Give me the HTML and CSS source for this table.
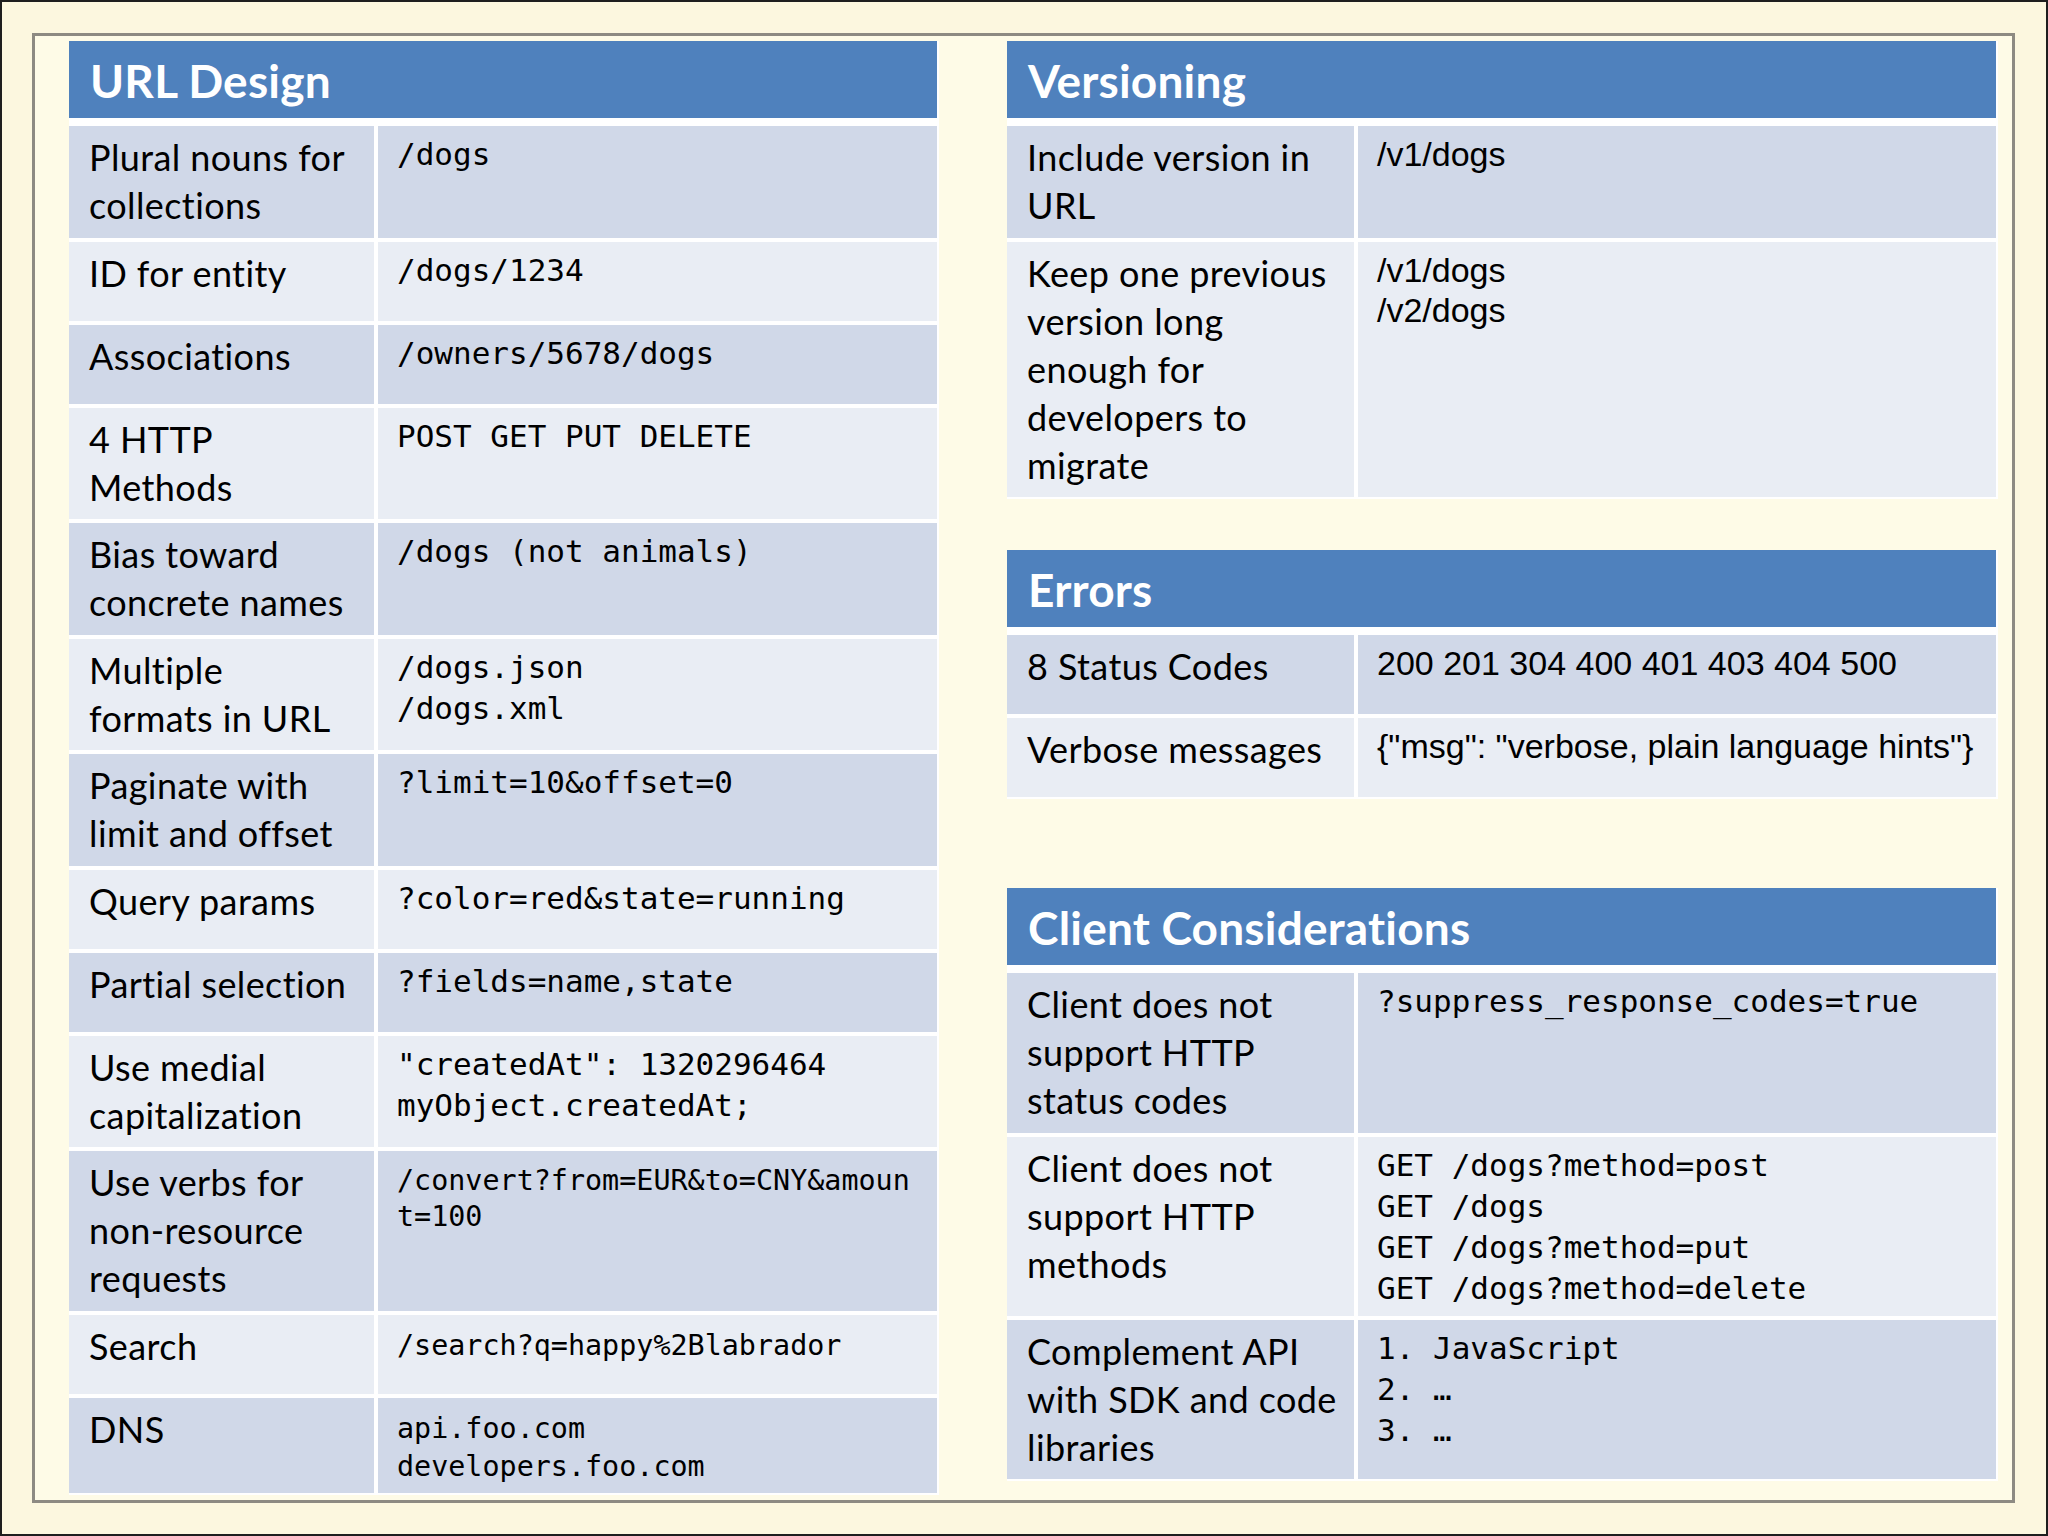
FILE: index.html
```html
<!DOCTYPE html>
<html lang="en">
<head>
<meta charset="utf-8">
<title>API Design Cheat Sheet</title>
<link rel="stylesheet" href="styles.css">
</head>
<body>
<div class="screen">
  <div class="frame">
    <div class="col">
      <section class="tbl tbl-left">
        <div class="hdr">URL Design</div>
        <div class="row odd"><div class="lbl">Plural nouns for<br>collections</div><div class="mono">/dogs</div></div>
        <div class="row even"><div class="lbl">ID for entity</div><div class="mono">/dogs/1234</div></div>
        <div class="row odd"><div class="lbl">Associations</div><div class="mono">/owners/5678/dogs</div></div>
        <div class="row even"><div class="lbl">4 HTTP<br>Methods</div><div class="mono">POST GET PUT DELETE</div></div>
        <div class="row odd"><div class="lbl">Bias toward<br>concrete names</div><div class="mono">/dogs (not animals)</div></div>
        <div class="row even"><div class="lbl">Multiple<br>formats in URL</div><div class="mono">/dogs.json<br>/dogs.xml</div></div>
        <div class="row odd"><div class="lbl">Paginate with<br>limit and offset</div><div class="mono">?limit=10&amp;offset=0</div></div>
        <div class="row even"><div class="lbl">Query params</div><div class="mono">?color=red&amp;state=running</div></div>
        <div class="row odd"><div class="lbl">Partial selection</div><div class="mono">?fields=name,state</div></div>
        <div class="row even"><div class="lbl">Use medial<br>capitalization</div><div class="mono">"createdAt": 1320296464<br>myObject.createdAt;</div></div>
        <div class="row odd"><div class="lbl">Use verbs for<br>non-resource<br>requests</div><div class="mono sm sm-tight">/convert?from=EUR&amp;to=CNY&amp;amoun<br>t=100</div></div>
        <div class="row even"><div class="lbl">Search</div><div class="mono sm">/search?q=happy%2Blabrador</div></div>
        <div class="row odd"><div class="lbl">DNS</div><div class="mono sm">api.foo.com<br>developers.foo.com</div></div>
      </section>
    </div>
    <div class="col col-right">
      <section class="tbl tbl-right">
        <div class="hdr">Versioning</div>
        <div class="row odd"><div class="lbl">Include version in<br>URL</div><div class="sans">/v1/dogs</div></div>
        <div class="row even"><div class="lbl">Keep one previous<br>version long<br>enough for<br>developers to<br>migrate</div><div class="sans">/v1/dogs<br>/v2/dogs</div></div>
      </section>
      <section class="tbl tbl-right tbl-errors">
        <div class="hdr">Errors</div>
        <div class="row odd"><div class="lbl">8 Status Codes</div><div class="sans">200 201 304 400 401 403 404 500</div></div>
        <div class="row even"><div class="lbl">Verbose messages</div><div class="sans">{"msg": "verbose, plain language hints"}</div></div>
      </section>
      <section class="tbl tbl-right tbl-client">
        <div class="hdr">Client Considerations</div>
        <div class="row odd"><div class="lbl">Client does not<br>support HTTP<br>status codes</div><div class="mono">?suppress_response_codes=true</div></div>
        <div class="row even"><div class="lbl">Client does not<br>support HTTP<br>methods</div><div class="mono">GET /dogs?method=post<br>GET /dogs<br>GET /dogs?method=put<br>GET /dogs?method=delete</div></div>
        <div class="row odd"><div class="lbl">Complement API<br>with SDK and code<br>libraries</div><div class="mono">1. JavaScript<br>2. …<br>3. …</div></div>
      </section>
    </div>
  </div>
</div>
</body>
</html>
```

FILE: styles.css
```css
* {
  box-sizing: border-box;
  margin: 0;
  padding: 0;
}

html, body {
  margin: 0;
  background: #fcf7df;
}

.screen {
  width: 2048px;
  height: 1536px;
  border: 2px solid #1e1e1e;
  background: #fcf7df;
  padding: 31px 31px 31px 30px;
}

.frame {
  height: 100%;
  border: 3px solid #8d8a82;
  background: #fefbe7;
  display: grid;
  grid-template-columns: 870px 991px;
  column-gap: 68px;
  padding: 5px 14px 0 34px;
  align-items: start;
}

.col-right {
  display: flex;
  flex-direction: column;
}

.tbl {
  background: #ffffff;
  padding: 0 2px 2px 0;
  display: flex;
  flex-direction: column;
  gap: 4px;
}

.tbl-errors {
  margin-top: 51px;
}

.tbl-client {
  margin-top: 89px;
}

.hdr {
  height: 77px;
  background: #4f81bd;
  color: #ffffff;
  font-family: "Lato", "Open Sans", sans-serif;
  font-weight: 700;
  font-size: 46px;
  letter-spacing: 0.2px;
  line-height: 73px;
  padding: 3px 0 0 21px;
  margin-bottom: 4px;
  white-space: nowrap;
}

.row {
  display: grid;
  column-gap: 4px;
}

.tbl-left .row {
  grid-template-columns: 305px 1fr;
}

.tbl-right .row {
  grid-template-columns: 347px 1fr;
}

.row > div {
  min-height: 79px;
  white-space: nowrap;
  color: #000000;
}

.odd > div {
  background: #d0d8e8;
}

.even > div {
  background: #e9edf4;
}

.lbl {
  font-family: "Lato", "Open Sans", sans-serif;
  font-size: 36px;
  letter-spacing: 0.4px;
  line-height: 48px;
  padding: 7px 8px 8.5px 20px;
}

.mono {
  font-family: "DejaVu Sans Mono", "Liberation Mono", monospace;
  font-size: 31px;
  line-height: 41px;
  padding: 8px 10px 7px 19px;
}

.mono.sm {
  font-size: 28.4px;
  line-height: 38px;
  padding-top: 12px;
}

.mono.sm-tight {
  line-height: 36px;
}

.sans {
  font-family: "Liberation Sans", Arial, sans-serif;
  font-size: 34px;
  line-height: 40.5px;
  padding: 8px 10px 7px 19px;
}
```
